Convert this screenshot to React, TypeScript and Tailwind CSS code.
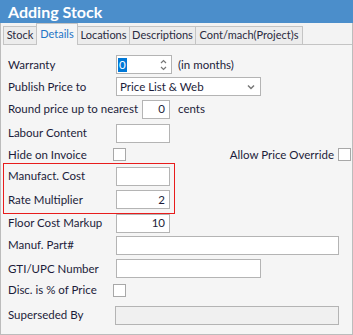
import type { ReactNode } from 'react'

const tabs = [
  { t: 'Stock', w: 'w-[34px]' },
  { t: 'Details', w: 'w-[42px]' },
  { t: 'Locations', w: 'w-[53px]' },
  { t: 'Descriptions', w: 'w-[67px]' },
  { t: 'Cont/mach(Project)s', w: 'w-[108px]' },
]

function Box({ w, value, disabled, className }: { w: string; value?: string; disabled?: boolean; className?: string }) {
  return (
    <div
      className={`${w} h-[19px] border border-[#b4b4b4] ${disabled ? 'bg-[#f0f0f0]' : 'bg-white'} flex items-center justify-end pr-[4px] ${className ?? ''}`}
    >
      {value}
    </div>
  )
}

function Check({ className }: { className?: string }) {
  return <div className={`w-[13px] h-[13px] border border-[#a8a8a8] bg-white ${className ?? ''}`} />
}

function Row({ h, label, children, labelW = 'w-[108px]' }: { h: string; label: string; children?: ReactNode; labelW?: string }) {
  return (
    <div className={`${h} flex items-center`}>
      <div className={`${labelW} shrink-0 whitespace-nowrap`}>{label}</div>
      {children}
    </div>
  )
}

export default function App() {
  return (
    <div className="w-[353px] h-[335px] bg-[#f5f5f5] text-[11.5px] text-[#1c1c3a] overflow-hidden" style={{ fontFamily: 'Lato, "Noto Sans", sans-serif' }}>
      {/* Title bar */}
      <div className="h-[23px] bg-[#4b8ecb] flex items-center pl-[8px]">
        <span className="text-white font-bold text-[16px] leading-none">Adding Stock</span>
      </div>

      {/* Tabs */}
      <div className="h-[22px] flex items-end pl-[2px] border-l border-r border-[#bcbcbc] bg-[#f3f3f3] text-[11px]">
        {tabs.map(({ t, w }, i) => {
          const active = t === 'Details'
          return (
            <div
              key={t}
              className={`${w} ${i > 0 ? '-ml-[1px]' : ''} ${
                active
                  ? 'h-[22px] flex items-center justify-center bg-[#f5f5f5] border border-b-0 border-[#c4c4c4] text-[#1e74c6] z-10'
                  : 'h-[19px] flex items-center justify-center bg-[#ececec] border border-[#c4c4c4] text-[#2a2a40]'
              }`}
            >
              {t}
            </div>
          )
        })}
        <div className="flex-1 border-b border-[#c4c4c4]" />
      </div>

      {/* Content */}
      <div className="h-[290px] border-l border-r border-b border-[#bcbcbc] pl-[7px] pr-[1px] pt-[9px]">
        <Row h="h-[21px]" label="Warranty">
          <div className="w-[56px] h-[19px] border border-[#b4b4b4] bg-white flex items-center pl-[1px] pr-[4px]">
            <span className="bg-[#0078d7] text-white px-[1px] leading-[14px]">0</span>
            <svg className="ml-auto" width="7" height="12" viewBox="0 0 7 12" fill="none" stroke="#777" strokeWidth="1.2">
              <path d="M1 4 L3.5 1.5 L6 4" />
              <path d="M1 8 L3.5 10.5 L6 8" />
            </svg>
          </div>
          <span className="ml-[6px]">(in months)</span>
        </Row>
        <Row h="h-[23px]" label="Publish Price to">
          <div className="w-[145px] h-[19px] border border-[#b4b4b4] bg-white flex items-center pl-[3px] pr-[5px]">
            <span>Price List &amp; Web</span>
            <svg className="ml-auto" width="8" height="6" viewBox="0 0 8 6" fill="none" stroke="#777" strokeWidth="1.5">
              <path d="M1 1.5 L4 4.5 L7 1.5" />
            </svg>
          </div>
        </Row>
        <Row h="h-[22px]" label="Round price up to nearest" labelW="w-[134px]">
          <Box w="w-[28px]" value="0" className="h-[18px]" />
          <span className="ml-[8px]">cents</span>
        </Row>
        <Row h="h-[26px]" label="Labour Content">
          <Box w="w-[54px]" />
        </Row>
        <Row h="h-[17px]" label="Hide on Invoice" labelW="w-[105px]">
          <Check />
          <span className="ml-auto mr-[4px]">Allow Price Override</span>
          <Check />
        </Row>
        <div className="w-[172px] -ml-[5px] pl-[4px] border border-[#e81c1c] pb-[2px]">
          <Row h="h-[24px]" label="Manufact. Cost">
            <Box w="w-[54px]" />
          </Row>
          <Row h="h-[23px]" label="Rate Multiplier">
            <Box w="w-[54px]" value="2" />
          </Row>
        </div>
        <Row h="h-[18px]" label="Floor Cost Markup">
          <Box w="w-[54px]" value="10" className="h-[18px]" />
        </Row>
        <Row h="h-[26px]" label="Manuf. Part#">
          <Box w="w-[223px]" className="h-[18px]" />
        </Row>
        <Row h="h-[21px]" label="GTI/UPC Number">
          <Box w="w-[145px]" />
        </Row>
        <Row h="h-[22px]" label="Disc. is % of Price" labelW="w-[105px]">
          <Check />
        </Row>
        <Row h="h-[28px]" label="Superseded By" labelW="w-[107px]">
          <Box w="w-[224px]" disabled />
        </Row>
      </div>
    </div>
  )
}
